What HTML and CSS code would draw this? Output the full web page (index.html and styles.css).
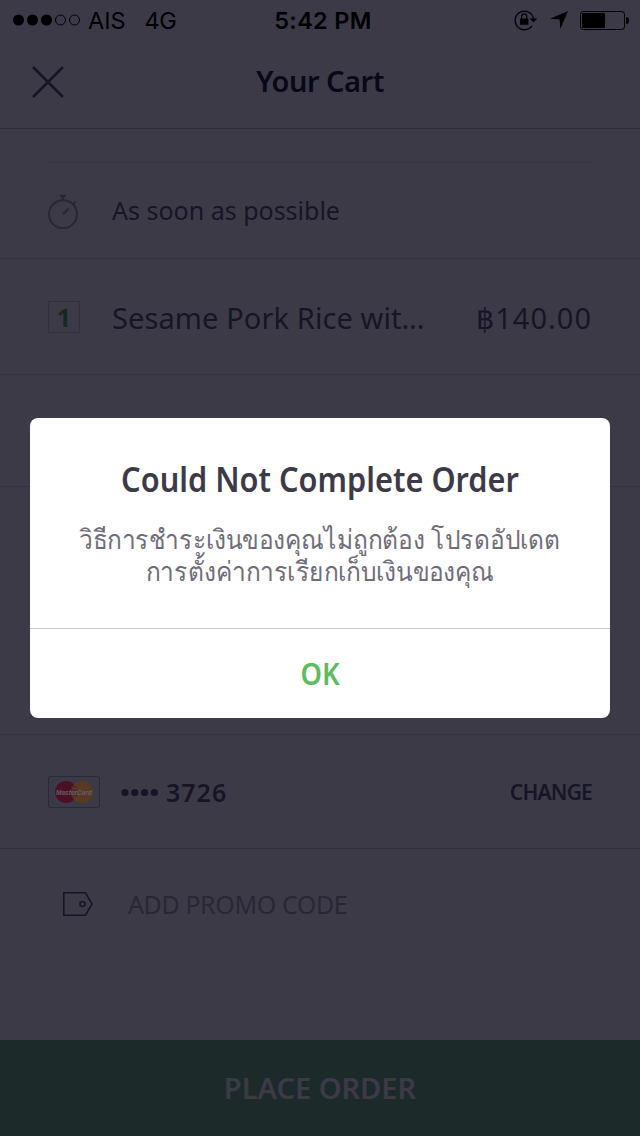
FILE: index.html
```html
<!DOCTYPE html>
<html lang="en">
<head>
    <meta charset="UTF-8">
    <meta name="viewport" content="width=device-width, initial-scale=1.0">
    <title>Your Cart</title>
    <link rel="stylesheet" href="styles.css">
</head>
<body>

    <div class="screen">
        <div class="status-bar">
            <div class="status-left">
                <svg width="68" height="12" viewBox="0 0 68 12">
                    <circle cx="5.5" cy="6" r="5.5"/>
                    <circle cx="19.5" cy="6" r="5.5"/>
                    <circle cx="33.5" cy="6" r="5.5"/>
                    <circle cx="47.5" cy="6" r="5" fill="none" stroke="#000"/>
                    <circle cx="61.5" cy="6" r="5" fill="none" stroke="#000"/>
                </svg>
                <span class="carrier">AIS</span>
                <span class="network">4G</span>
            </div>
            <div class="clock">5:42 PM</div>
            <div class="status-right">
                <svg width="24" height="22" viewBox="0 0 24 22">
                    <path d="M18 16.8A9.3 9.3 0 1 1 19.6 10" fill="none" stroke="#000" stroke-width="1.3"/>
                    <path d="M15.8 9.4h7.4L19.5 13.4z"/>
                    <rect x="6" y="9.5" width="8.4" height="6.3" rx=".6"/>
                    <path d="M7.6 10V7.4a2.6 2.6 0 0 1 5.2 0V10" fill="none" stroke="#000" stroke-width="1.2"/>
                </svg>
                <svg width="18" height="18" viewBox="0 0 18 18">
                    <path d="M18 0L10.4 18L9.6 8.6L0 7.8z"/>
                </svg>
                <svg width="49" height="19" viewBox="0 0 49 19">
                    <rect x=".5" y=".5" width="44" height="18" rx="2.8" fill="none" stroke="#000"/>
                    <rect x="2" y="2" width="23" height="15" rx="1"/>
                    <path d="M46 6h1.3q1.7 1 1.7 3.5t-1.7 3.5H46z"/>
                </svg>
            </div>
        </div>

        <div class="header">
            <svg class="close" width="32" height="32" viewBox="0 0 32 32">
                <path d="M1 1L31 31M31 1L1 31" fill="none" stroke="#161526" stroke-width="2.6"/>
            </svg>
            <h1>Your Cart</h1>
        </div>

        <div class="strip"></div>

        <div class="row time">
            <svg width="32" height="36" viewBox="0 0 32 36">
                <g fill="none" stroke="#292735" stroke-width="2">
                    <circle cx="15" cy="21.2" r="14"/>
                    <path d="M15 7V3M15 21.2L20.7 15.5M25 11.5L27.5 8.5"/>
                    <path d="M12 3h6" stroke-width="2.4"/>
                </g>
            </svg>
            <span class="time-text">As soon as possible</span>
        </div>

        <div class="row item">
            <span class="qty">1</span>
            <span class="name">Sesame Pork Rice wit…</span>
            <span class="price">฿140.00</span>
        </div>

        <div class="row note"></div>
        <div class="row totals"></div>

        <div class="row payment">
            <svg width="52" height="32" viewBox="0 0 52 32">
                <rect x=".5" y=".5" width="51" height="31" rx="2.5" fill="#3b3948" stroke="#2b2a36"/>
                <circle cx="18" cy="16" r="11" fill="#4b1026"/>
                <circle cx="34" cy="16" r="11" fill="#573a20"/>
                <path d="M23 11h6M22.5 14h7M22.5 17h7M23 20h6" stroke="#51202a" stroke-width="1"/>
                <text class="mc" x="26" y="18.5" text-anchor="middle" textLength="36" lengthAdjust="spacingAndGlyphs">MasterCard</text>
            </svg>
            <svg class="dots" width="38" height="8" viewBox="0 0 38 8">
                <circle cx="4" cy="4.5" r="3.6"/>
                <circle cx="13.8" cy="4.5" r="3.6"/>
                <circle cx="23.6" cy="4.5" r="3.6"/>
                <circle cx="33.4" cy="4.5" r="3.6"/>
            </svg>
            <span class="digits">3726</span>
            <span class="change">CHANGE</span>
        </div>

        <div class="promo">
            <svg width="30" height="24" viewBox="0 0 30 24">
                <g fill="none" stroke="#161526" stroke-width="1.5">
                    <path d="M.8.8H22.5L29 12L22.5 23.2H.8z"/>
                    <circle cx="19.5" cy="12" r="2.5"/>
                </g>
            </svg>
            <span class="promo-text">ADD PROMO CODE</span>
        </div>

        <div class="place-order">PLACE ORDER</div>
    </div>

    <div class="modal">
        <div class="modal-body">
            <h2>Could Not Complete Order</h2>
            <p>วิธีการชำระเงินของคุณไม่ถูกต้อง โปรดอัปเดต<br>การตั้งค่าการเรียกเก็บเงินของคุณ</p>
        </div>
        <div class="modal-ok">OK</div>
    </div>

</body>
</html>
```
FILE: styles.css
```css
* {
    box-sizing: border-box;
}
body {
    margin: 0;
    background: #3d3a48;
    font-family: "Noto Sans", "Open Sans", sans-serif;
    color: #161526;
}
.screen {
    width: 640px;
    height: 1136px;
    display: flex;
    flex-direction: column;
    overflow: hidden;
    white-space: nowrap;
}
svg {
    display: block;
    flex: none;
}
.status-bar {
    height: 40px;
    display: grid;
    grid-template-columns: 1fr auto 1fr;
    align-items: center;
    padding: 0 11px 0 13px;
    font-family: Inter, "Liberation Sans", sans-serif;
    font-size: 23.5px;
    color: #000;
}
.status-left, .status-right {
    display: flex;
    align-items: center;
}
.carrier {
    margin-left: 7px;
}
.network {
    margin-left: 19px;
    letter-spacing: -0.5px;
}
.clock {
    padding-left: 4px;
    font-weight: 600;
    letter-spacing: 0.3px;
}
.status-right {
    justify-content: flex-end;
    gap: 12px;
}
.header {
    height: 89px;
    display: grid;
    grid-template-columns: 32px 1fr 32px;
    align-items: center;
    padding: 0 32px 5px;
    border-bottom: 1px solid #2e2c39;
}
.header h1 {
    margin: 0;
    padding-bottom: 2px;
    text-align: center;
    font-size: 29px;
    font-weight: 600;
    line-height: 38px;
    letter-spacing: -0.5px;
    color: #090819;
}
.strip {
    height: 34px;
    margin: 0 48px;
    border-bottom: 2px solid #3a3745;
}
.row {
    display: flex;
    align-items: center;
    padding: 0 48px;
    border-bottom: 1px solid #34323f;
}
.time {
    height: 96px;
}
.time-text {
    margin-left: 32px;
    padding-bottom: 1px;
    font-size: 25px;
}
.item {
    height: 116px;
}
.qty {
    width: 32px;
    height: 32px;
    border: 1px solid #31303c;
    font-size: 25px;
    font-weight: 700;
    line-height: 30px;
    text-align: center;
    color: #14291f;
}
.name {
    margin-left: 32px;
    padding-top: 2px;
    font-size: 29px;
    letter-spacing: 0.1px;
}
.price {
    margin-left: auto;
    padding-top: 2px;
    font-size: 29px;
    letter-spacing: 1px;
}
.note {
    height: 112px;
}
.totals {
    height: 248px;
}
.payment {
    height: 114px;
}
.mc {
    font-family: "Liberation Sans", Arial, sans-serif;
    font-size: 7.5px;
    font-style: italic;
    font-weight: 700;
    fill: #625f69;
}
.dots {
    margin-left: 21px;
    fill: #161526;
}
.digits {
    margin-left: 7px;
    font-size: 25px;
    font-weight: 600;
    letter-spacing: 1px;
}
.change {
    margin-left: auto;
    font-size: 21px;
    font-weight: 600;
    letter-spacing: -0.8px;
}
.promo {
    height: 191px;
    display: flex;
    align-items: flex-start;
    padding: 43px 63px 0;
}
.promo-text {
    margin-left: 35px;
    font-size: 25px;
    line-height: 24px;
    letter-spacing: -0.4px;
    color: #292735;
}
.place-order {
    height: 96px;
    background: #1c2b29;
    color: #3d3a48;
    font-size: 29px;
    font-weight: 600;
    line-height: 95px;
    text-align: center;
}
.modal {
    position: absolute;
    left: 30px;
    top: 418px;
    width: 580px;
    height: 300px;
    background: #fff;
    border-radius: 8px;
    text-align: center;
    white-space: nowrap;
}
.modal-body {
    height: 211px;
    padding-top: 37px;
    border-bottom: 1px solid #c9c8ce;
}
.modal h2 {
    margin: 0;
    font-size: 35px;
    font-weight: 600;
    line-height: 48px;
    color: #3d3a48;
    transform: scaleX(0.878);
}
.modal p {
    margin: 20px 0 0;
    font-size: 27px;
    line-height: 32px;
    color: #706d79;
    transform: scaleX(0.907);
}
.modal-ok {
    font-size: 31px;
    font-weight: 600;
    line-height: 88px;
    color: #5dbd5d;
    transform: scaleX(0.88);
}
```
